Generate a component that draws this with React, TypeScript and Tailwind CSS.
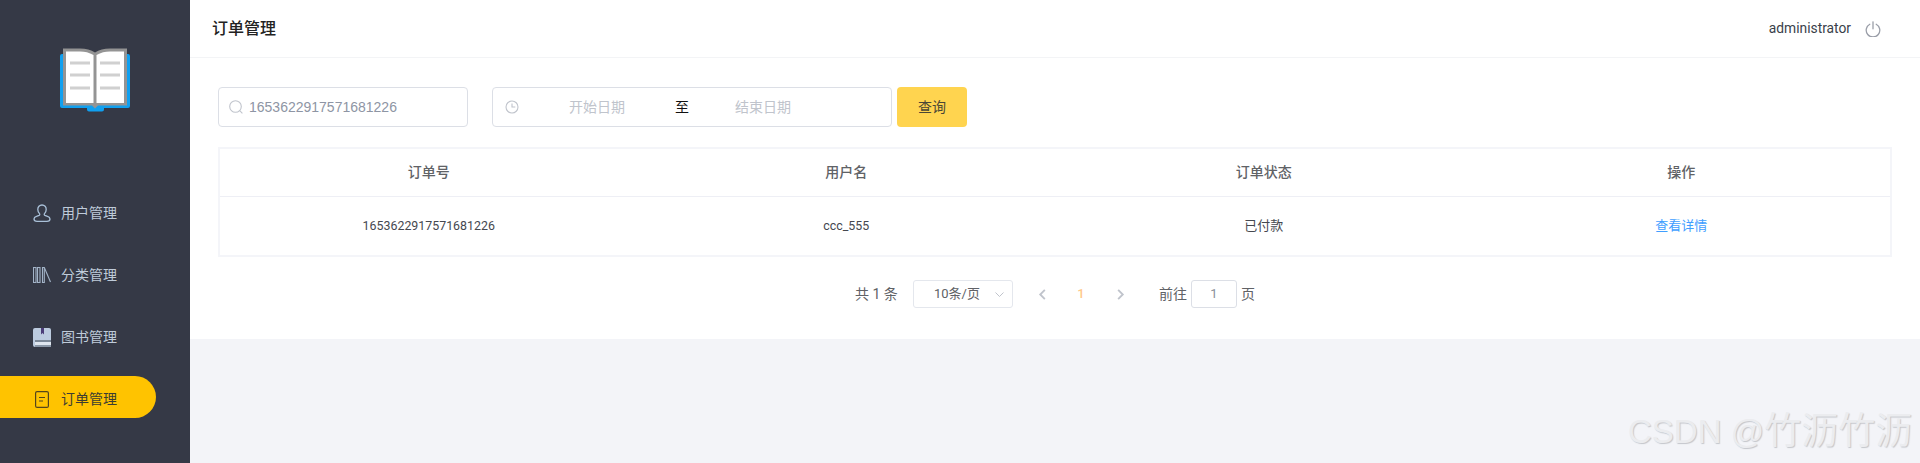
import React from "react";

const font = "font-['Roboto','Noto_Sans_CJK_SC',sans-serif]";

function BookLogo() {
  return (
    <svg width="70" height="65" viewBox="0 0 70 65" className="block">
      <path d="M0 9a2 2 0 0 1 2-2h66a2 2 0 0 1 2 2v50a2 2 0 0 1-2 2H44v1.500a2 2 0 0 1-2 2H29a2 2 0 0 1-2-2V61H2a2 2 0 0 1-2-2Z" fill="#10a0f0" />
      <path d="M3 1.500h17c6 0 11 1.500 15 4 4-2.500 9-4 15-4h17v57H38l-3 3-3-3H3Z" fill="#949494" />
      <path d="M6 4.500h14c5 0 9 1 13.500 3.500v48H6Z" fill="#fff" />
      <path d="M64 4.500H50c-5 0-9 1-13.500 3.500v48H64Z" fill="#fff" />
      <g fill="#d0d0d0">
        <rect x="10" y="14.500" width="20" height="3" />
        <rect x="10" y="26.500" width="20" height="3" />
        <rect x="10" y="39.500" width="20" height="3" />
        <rect x="40" y="14.500" width="20" height="3" />
        <rect x="40" y="26.500" width="20" height="3" />
        <rect x="40" y="39.500" width="20" height="3" />
      </g>
    </svg>
  );
}

function UserIcon() {
  return (
    <svg width="18" height="18" viewBox="0 0 18 18" fill="none" stroke="#a9c0d8" strokeWidth="1.300">
      <path d="M9 1c-2.600 0-4.200 2-4.200 4.400 0 1.800.8 3.200 1.700 4.200.5.600.3 1.500-.4 1.800l-2.600 1C2 12.900 1 13.800 1 15c0 1.400 1.200 2.300 3 2.300h10c1.800 0 3-.9 3-2.300 0-1.200-1-2.100-2.500-2.600l-2.600-1c-.7-.3-.9-1.200-.4-1.800.9-1 1.700-2.400 1.700-4.200C13.200 3 11.600 1 9 1Z" />
    </svg>
  );
}

function ShelfIcon() {
  return (
    <svg width="18" height="16" viewBox="0 0 18 16" fill="none" stroke="#a3b4c8" strokeWidth="1.100">
      <rect x="0.500" y="0.500" width="2.500" height="15" />
      <rect x="4.500" y="0.500" width="2.500" height="15" />
      <path d="M9.500.500h1.800V15.500H9.500Z" />
      <path d="M11.500 1 17.500 15" />
    </svg>
  );
}

function BookIcon() {
  return (
    <svg width="18" height="19" viewBox="0 0 18 19">
      <path d="M2 0h14a2 2 0 0 1 2 2v15a2 2 0 0 1-2 2H2a2 2 0 0 1-2-2V2a2 2 0 0 1 2-2Z" fill="#bccbdf" />
      <rect x="2" y="12" width="16" height="2" fill="#7a8797" />
      <rect x="2" y="14" width="16" height="3" fill="#dfe6ef" />
      <rect x="2" y="17" width="16" height="2" fill="#8b98a8" />
      <path d="M8 0h3v6.500L9.500 5 8 6.500Z" fill="#4b3d78" />
    </svg>
  );
}

function OrderIcon() {
  return (
    <svg width="14" height="17" viewBox="0 0 14 17" fill="none" stroke="#55451c" strokeWidth="1.200">
      <rect x="0.600" y="0.600" width="12.800" height="15.800" rx="1.500" />
      <path d="M4 6.500h6M4 10h4" />
    </svg>
  );
}

function SearchIcon() {
  return (
    <svg width="14" height="14" viewBox="0 0 14 14" fill="none" stroke="#c0c4cc" strokeWidth="1.100">
      <circle cx="6.500" cy="6.500" r="5.800" />
      <path d="m10.700 10.700 2.700 2.700" />
    </svg>
  );
}

function ClockIcon() {
  return (
    <svg width="14" height="14" viewBox="0 0 14 14" fill="none" stroke="#c0c4cc" strokeWidth="1.100">
      <circle cx="7" cy="7" r="6" />
      <path d="M7 3.500V7h3.300" />
    </svg>
  );
}

function PowerIcon() {
  return (
    <svg width="16" height="16" viewBox="0 0 16 16" fill="none" stroke="#9a9ea8" strokeWidth="1.300" strokeLinecap="round">
      <path d="M4.800 3.200a6.800 6.800 0 1 0 6.400 0" />
      <path d="M8 .8v7" />
    </svg>
  );
}

function Chevron({ dir, color, w = 2 }: { dir: "left" | "right" | "down"; color: string; w?: number }) {
  const d = dir === "left" ? "M8.500 1.500 3.500 6.500l5 5" : dir === "right" ? "M4.500 1.500l5 5-5 5" : "M2.500 4.500l4 4 4-4";
  return (
    <svg width="13" height="13" viewBox="0 0 13 13" fill="none" stroke={color} strokeWidth={w}>
      <path d={d} />
    </svg>
  );
}

function NavItem({ icon, label, active }: { icon: React.ReactNode; label: string; active?: boolean }) {
  return (
    <div
      className={
        active
          ? "flex h-[42px] w-[156px] items-center rounded-r-[21px] bg-[#ffc300] pl-[33px] pt-1 text-sm text-[#3c3c32]"
          : "flex h-[42px] w-[156px] items-center pl-[33px] pt-1 text-sm text-[#bfcbd9]"
      }
    >
      <div className="flex w-[18px] justify-center">{icon}</div>
      <span className="ml-[10px]">{label}</span>
    </div>
  );
}

export default function App() {
  return (
    <div className={`relative flex h-[463px] w-full overflow-hidden bg-[#f3f4f8] ${font}`}>
      <aside className="flex w-[190px] shrink-0 flex-col bg-[#353946]">
        <div className="flex justify-center pt-[47px]">
          <BookLogo />
        </div>
        <nav className="mt-[78px] flex flex-col gap-5">
          <NavItem icon={<UserIcon />} label="用户管理" />
          <NavItem icon={<ShelfIcon />} label="分类管理" />
          <NavItem icon={<BookIcon />} label="图书管理" />
          <NavItem icon={<OrderIcon />} label="订单管理" active />
        </nav>
      </aside>

      <main className="flex min-w-0 flex-1 flex-col">
        <header className="flex h-[58px] items-center justify-between border-b border-[#f3f4f6] bg-white pl-[22px] pr-[39px]">
          <h1 className="text-base font-medium leading-none text-[#222]">订单管理</h1>
          <div className="flex items-center gap-[14px]">
            <span className="text-[13.800px] text-[#3a3f4a]">administrator</span>
            <PowerIcon />
          </div>
        </header>

        <section className="flex h-[281px] flex-col bg-white px-7 pt-[29px]">
          <div className="flex h-10 items-center">
            <div className="flex h-10 w-[250px] items-center rounded border border-[#dcdfe6] pl-[10px]">
              <SearchIcon />
              <span className="ml-[6px] font-['Liberation_Sans',sans-serif] text-sm text-[#8e95a4]">1653622917571681226</span>
            </div>
            <div className="ml-6 flex h-10 w-[400px] items-center rounded border border-[#dcdfe6] pl-3 text-sm">
              <ClockIcon />
              <span className="ml-[50px] w-14 text-[#c0c4cc]">开始日期</span>
              <span className="ml-[50px] w-[14px] text-[#111]">至</span>
              <span className="ml-[46px] w-14 text-[#c0c4cc]">结束日期</span>
            </div>
            <button className="ml-[5px] h-10 w-[70px] rounded bg-[#ffd44f] text-sm text-[#4a4636]">查询</button>
          </div>

          <div className="mt-5 h-[110px] border-2 border-[#f4f5f9]">
            <div className="grid h-[48px] grid-cols-4 border-b border-[#eeeff5] text-center text-sm font-medium leading-[47px] text-[#606266]">
              <div>订单号</div>
              <div>用户名</div>
              <div>订单状态</div>
              <div>操作</div>
            </div>
            <div className="grid h-[58px] grid-cols-4 text-center text-[13px] leading-[57px] text-[#45484f]">
              <div className="text-[12.400px]">1653622917571681226</div>
              <div className="text-[12.400px]">ccc_555</div>
              <div>已付款</div>
              <div className="text-[#409eff]">查看详情</div>
            </div>
          </div>

          <div className="mt-[23px] flex h-7 items-center justify-center text-sm text-[#606266]">
            <span className="mr-[15px] w-[43px] whitespace-nowrap">共 1 条</span>
            <div className="flex h-7 w-[100px] items-center rounded-[3px] border border-[#e4e7ed] pl-5 pr-[6px] text-[13px]">
              <span className="flex-1">10条/页</span>
              <Chevron dir="down" color="#c0c4cc" w={1} />
            </div>
            <div className="ml-6 flex w-[12px] justify-center">
              <Chevron dir="left" color="#c0c4cc" />
            </div>
            <span className="ml-[25px] w-[14px] text-center text-[13px] font-medium text-[#ffc98a]">1</span>
            <div className="ml-[26px] flex w-[12px] justify-center">
              <Chevron dir="right" color="#c0c4cc" />
            </div>
            <span className="ml-[33px]">前往</span>
            <div className="mx-1 flex h-7 w-[46px] items-center justify-center rounded-[3px] border border-[#dcdfe6] text-[13px] text-[#8a8f99]">1</div>
            <span>页</span>
          </div>
        </section>
      </main>

      <div className="absolute left-[1628px] top-[410px] flex items-center whitespace-nowrap font-['Liberation_Sans','Noto_Sans_CJK_SC',sans-serif] leading-[44px] text-[#ebecef] [text-shadow:1px_1px_1px_#c4c6cb]">
        <span className="text-[33px]">CSDN @</span>
        <span className="text-[37px]">竹沥竹沥</span>
      </div>
    </div>
  );
}
